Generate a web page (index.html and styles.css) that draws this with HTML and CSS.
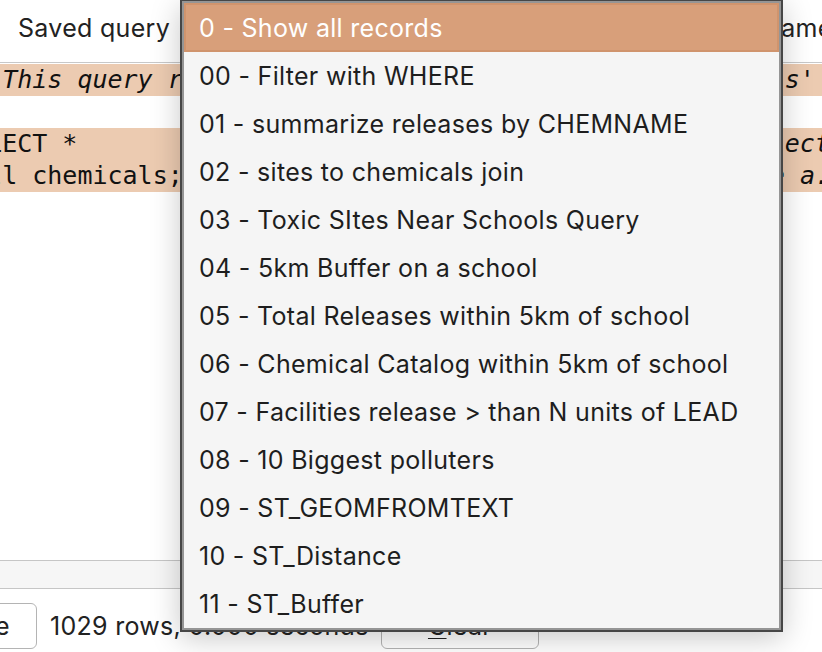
FILE: index.html
```html
<!DOCTYPE html>
<html>
<head>
<meta charset="utf-8">
<link rel="stylesheet" href="styles.css">
</head>
<body>
<div class="app">
  <div class="topbar">
    <span class="label">Saved query</span>
    <span class="combo-slot"></span>
    <span class="label">Name</span>
  </div>
  <div class="editor">
    <div class="code">
      <div class="line hl"><i>/* This query returns all rows from the table 'chemicals' */</i></div>
      <div class="line"> </div>
      <div class="line hl">SELECT *                                         <i>-- select all columns</i></div>
      <div class="line hl"> all chemicals;                         <i>-- source table a.k.a. TRI</i></div>
    </div>
  </div>
  <div class="hscroll"></div>
  <div class="bottombar">
    <button class="btn run">Execute</button>
    <span class="status">1029 rows, 0.000 seconds</span>
    <button class="btn clear"><u>C</u>lear</button>
  </div>

  <div class="popup">
    <div class="item selected">0 - Show all records</div>
    <div class="item">00 - Filter with WHERE</div>
    <div class="item">01 - summarize releases by CHEMNAME</div>
    <div class="item">02 - sites to chemicals join</div>
    <div class="item">03 - Toxic SItes Near Schools Query</div>
    <div class="item">04 - 5km Buffer on a school</div>
    <div class="item">05 - Total Releases within 5km of school</div>
    <div class="item">06 - Chemical Catalog within 5km of school</div>
    <div class="item">07 - Facilities release &gt; than N units of LEAD</div>
    <div class="item">08 - 10 Biggest polluters</div>
    <div class="item">09 - ST_GEOMFROMTEXT</div>
    <div class="item">10 - ST_Distance</div>
    <div class="item">11 - ST_Buffer</div>
  </div>
</div>
</body>
</html>
```

FILE: styles.css
```css
* { box-sizing: border-box; }
html, body { margin: 0; padding: 0; background: #fff; }
body {
  font-family: "Inter", "Liberation Sans", sans-serif;
  color: #222;
}
.app {
  position: relative;
  width: 822px;
  height: 652px;
  overflow: hidden;
  display: flex;
  flex-direction: column;
  background: #fff;
}
.topbar {
  height: 63px;
  flex-shrink: 0;
  display: grid;
  grid-template-columns: 180px 582px auto;
  align-items: center;
  border-bottom: 1px solid #c8c8c8;
  padding-bottom: 6px;
}
.topbar .label {
  font-size: 25px;
  letter-spacing: 0.3px;
  white-space: nowrap;
}
.topbar .label:first-child { padding-left: 18px; }

.editor {
  flex: 1;
  overflow: hidden;
  padding-top: 1px;
}
.code {
  margin-left: -43px;
  font-family: "DejaVu Sans Mono", "Liberation Mono", monospace;
  font-size: 25px;
  line-height: 32px;
  color: #111;
}
.line { height: 32px; white-space: pre; }
.line.hl { background: #eccbb1; }
.code i { font-style: oblique; }

.hscroll {
  height: 29px;
  flex-shrink: 0;
  background: #f6f6f6;
  border-top: 1px solid #c6c6c6;
  border-bottom: 1px solid #c6c6c6;
}
.bottombar {
  height: 63px;
  flex-shrink: 0;
  display: flex;
  align-items: flex-start;
  padding-top: 14px;
}
.btn {
  font-family: inherit;
  font-size: 25px;
  letter-spacing: 0.3px;
  color: #222;
  background: #fff;
  border: 1px solid #b4b4b4;
  border-radius: 6px;
  height: 46px;
  padding: 0;
  flex-shrink: 0;
}
.btn.run {
  width: 130px;
  margin-left: -93px;
  text-align: right;
  padding-right: 26px;
}
.status {
  font-size: 25px;
  letter-spacing: 0.3px;
  line-height: 46px;
  margin-left: 13px;
  white-space: nowrap;
  width: 331px;
  flex-shrink: 0;
}
.btn.clear {
  width: 158px;
}
.btn.clear u { text-decoration-thickness: 1px; text-underline-offset: 3px; }

.popup {
  position: absolute;
  left: 180px;
  top: 0;
  width: 603px;
  height: 632px;
  background: #f5f5f5;
  border: 2px solid #464646;
  border-top-width: 1px;
  padding: 2px;
  box-shadow: inset 0 0 0 2px #959595, 0 6px 28px rgba(0, 0, 0, 0.22);
}
.item {
  height: 48px;
  display: flex;
  align-items: center;
  padding-left: 15px;
  font-size: 25px;
  letter-spacing: 0.3px;
  color: #1e1e1e;
  white-space: nowrap;
}
.item.selected {
  height: 49px;
  background: #d89f7a;
  border: 2px solid #d0946d;
  padding-left: 13px;
  color: #fff;
}
```
